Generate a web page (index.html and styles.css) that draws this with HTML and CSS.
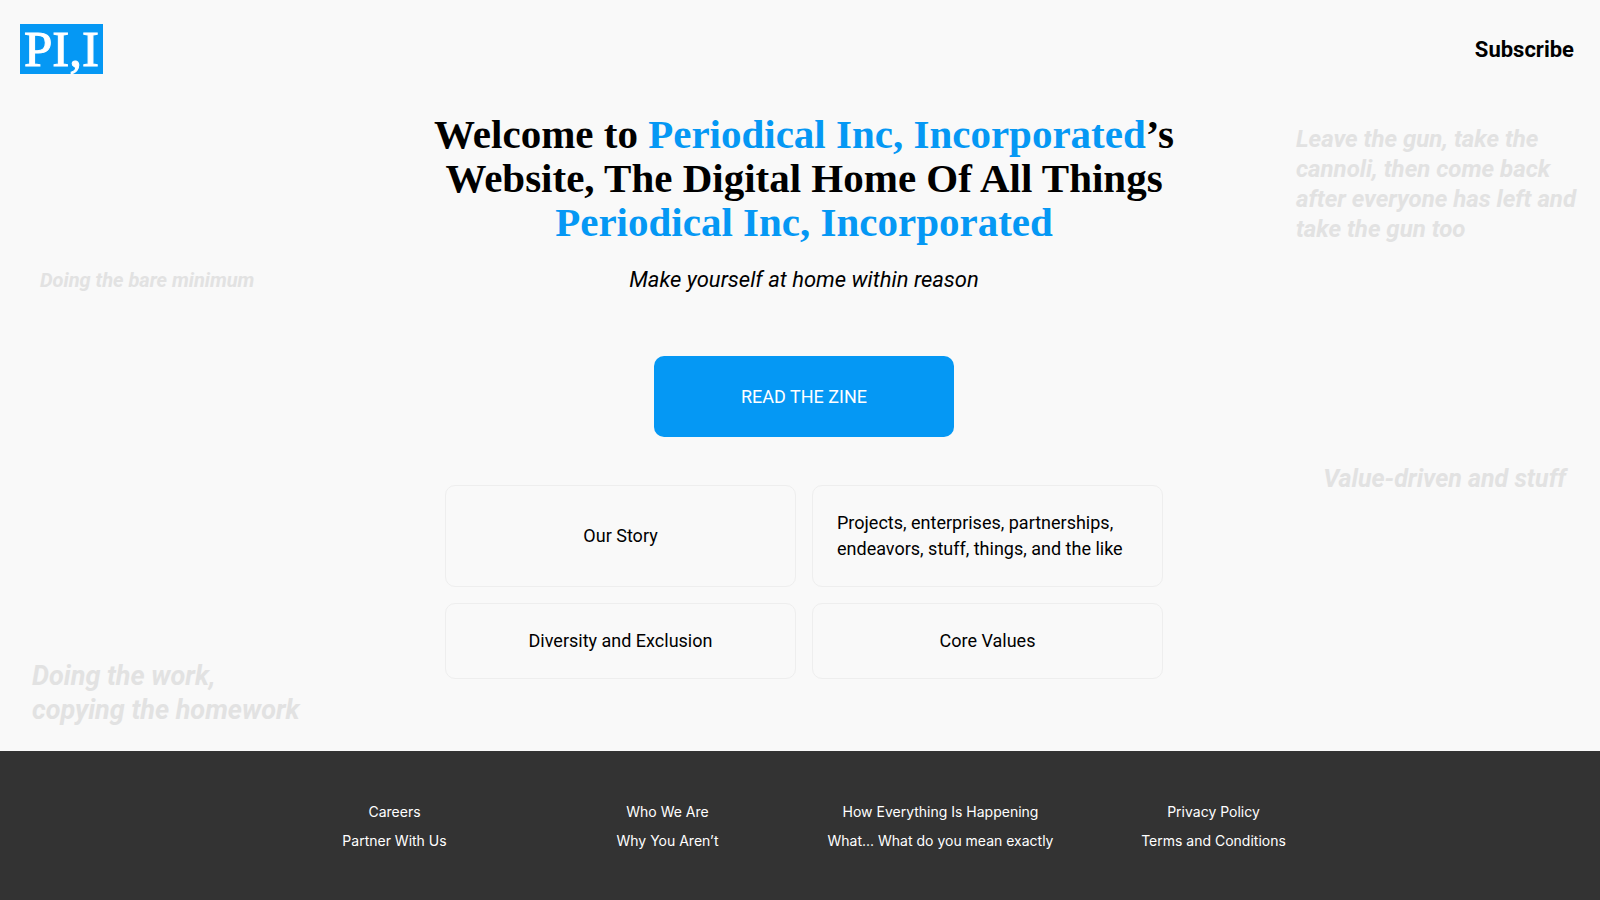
FILE: index.html
```html
<!DOCTYPE html>
<html lang="en">
<head>
<meta charset="utf-8">
<title>Periodical Inc, Incorporated</title>
<link rel="stylesheet" href="styles.css">
</head>
<body>
<header class="topbar">
  <a class="logo" href="#">PI,I</a>
  <a class="subscribe" href="#">Subscribe</a>
</header>
<main class="stage">
  <aside class="side side-left">
    <p class="phrase phrase-small">Doing the bare minimum</p>
    <p class="phrase phrase-large">Doing the work,<br>copying the homework</p>
  </aside>
  <section class="hero">
    <h1 class="title">Welcome to <span class="brand">Periodical Inc, Incorporated</span>’s<br>Website, The Digital Home Of All Things<br><span class="brand">Periodical Inc, Incorporated</span></h1>
    <p class="tagline">Make yourself at home within reason</p>
    <a class="cta" href="#">READ THE ZINE</a>
    <nav class="cards">
      <a class="card" href="#">Our Story</a>
      <a class="card card-long" href="#"><span>Projects, enterprises, partnerships,<br>endeavors, stuff, things, and the like</span></a>
      <a class="card" href="#">Diversity and Exclusion</a>
      <a class="card" href="#">Core Values</a>
    </nav>
  </section>
  <aside class="side side-right">
    <p class="phrase phrase-medium">Leave the gun, take the<br>cannoli, then come back<br>after everyone has left and<br>take the gun too</p>
    <p class="phrase phrase-value">Value-driven and stuff</p>
  </aside>
</main>
<footer class="footer">
  <nav class="footer-links">
    <div class="footer-col"><a href="#">Careers</a><a href="#">Partner With Us</a></div>
    <div class="footer-col"><a href="#">Who We Are</a><a href="#">Why You Aren’t</a></div>
    <div class="footer-col"><a href="#">How Everything Is Happening</a><a href="#">What... What do you mean exactly</a></div>
    <div class="footer-col"><a href="#">Privacy Policy</a><a href="#">Terms and Conditions</a></div>
  </nav>
</footer>
</body>
</html>
```
FILE: styles.css
```css
* { box-sizing: border-box; }

body {
  margin: 0;
  min-height: 100vh;
  display: flex;
  flex-direction: column;
  background: #f9f9f9;
  color: #000;
  font-family: Roboto, "Liberation Sans", sans-serif;
}

a { color: inherit; text-decoration: none; }
h1, p { margin: 0; }

.topbar {
  display: flex;
  justify-content: space-between;
  align-items: center;
  padding: 24px 26px 24px 20px;
}

.logo {
  padding: 0 4px;
  background: #0598f4;
  color: #fff;
  font-family: "Liberation Serif", serif;
  font-size: 51px;
  line-height: 50px;
  -webkit-text-stroke: 1px #fff;
}

.subscribe { padding-top: 2px; font-size: 22px; font-weight: 700; line-height: 28px; }

.stage {
  flex: 1;
  display: grid;
  grid-template-columns: 1fr 760px 1fr;
  padding-left: 8px;
}

.side { display: flex; flex-direction: column; }
.side-left { justify-content: space-between; padding: 170px 0 24px 24px; }
.side-right { align-items: flex-end; gap: 220px; padding: 26px 24px 0 0; }

.phrase {
  color: #e2e2e2;
  font-style: italic;
  font-weight: 700;
  white-space: nowrap;
}
.phrase-small { padding-left: 8px; font-size: 20px; line-height: 24px; }
.phrase-medium { font-size: 24px; line-height: 30px; }
.phrase-value { padding-right: 10px; font-size: 25px; line-height: 30px; }
.phrase-large { font-size: 27px; line-height: 34px; }

.hero {
  display: flex;
  flex-direction: column;
  align-items: center;
  padding-top: 14px;
}

.title {
  font-family: "Liberation Serif", serif;
  font-size: 41px;
  line-height: 44px;
  text-align: center;
  white-space: nowrap;
}
.brand { color: #0598f4; }

.tagline {
  margin-top: 20px;
  font-size: 22px;
  font-style: italic;
  line-height: 32px;
}

.cta {
  width: 300px;
  margin-top: 60px;
  padding: 28px 16px;
  border-radius: 10px;
  background: #0598f4;
  color: #fff;
  font-size: 18px;
  line-height: 25px;
  text-align: center;
}

.cards {
  display: grid;
  grid-template-columns: 351px 351px;
  gap: 16px;
  margin-top: 48px;
  padding-bottom: 24px;
}

.card {
  display: flex;
  justify-content: center;
  align-items: center;
  padding: 24px;
  border: 1px solid #eee;
  border-radius: 10px;
  font-size: 18px;
  line-height: 26px;
}
.card-long { justify-content: flex-start; white-space: nowrap; }

.footer { padding: 46px 0 45px 8px; background: #333; color: #fff; }

.footer-links {
  display: grid;
  grid-template-columns: repeat(4, 273px);
  justify-content: center;
}

.footer-col {
  display: flex;
  flex-direction: column;
  align-items: center;
  font-family: Inter, "Liberation Sans", sans-serif;
  font-size: 14px;
  line-height: 29px;
  white-space: nowrap;
}
```
